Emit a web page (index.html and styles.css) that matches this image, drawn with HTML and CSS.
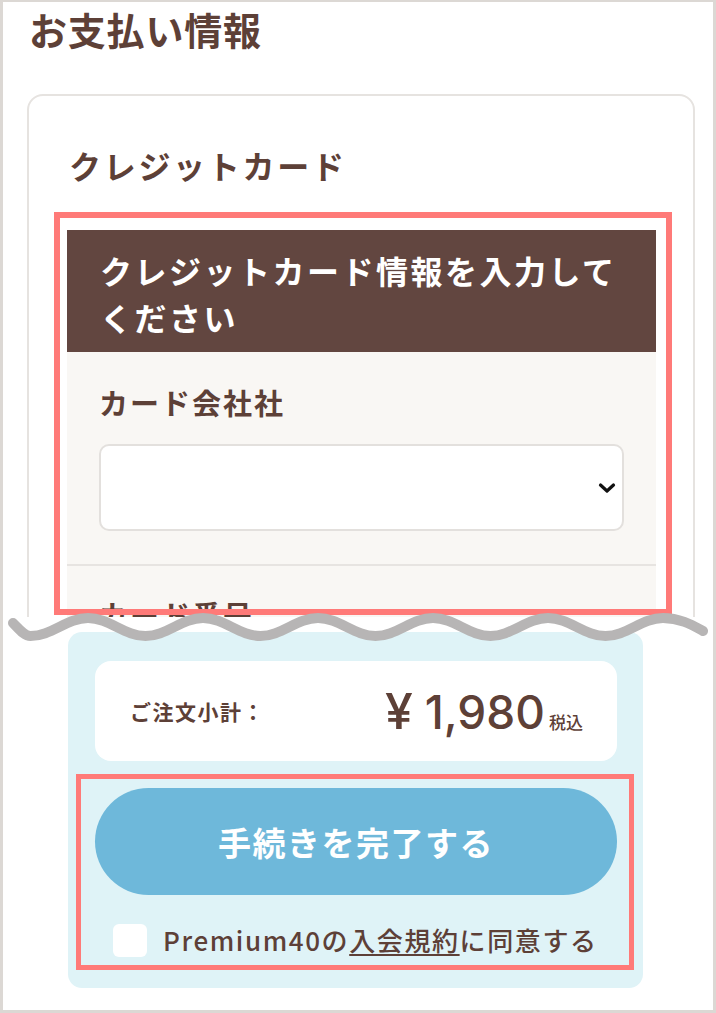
FILE: index.html
```html
<!DOCTYPE html>
<html lang="ja">
<head>
<meta charset="utf-8">
<title>お支払い情報</title>
<link rel="stylesheet" href="styles.css">
</head>
<body>
<div class="frame">
  <div class="shot-top">
    <h1 class="page-title">お支払い情報</h1>
    <section class="card">
      <h2 class="card-title">クレジットカード</h2>
      <div class="cc-form">
        <div class="cc-head">クレジットカード情報を入力してください</div>
        <div class="field">
          <label class="field-label">カード会社社</label>
          <div class="select">
            <svg class="chev" width="18" height="12" viewBox="0 0 18 12"><path d="M2.5 3 L9 9 L15.5 3" fill="none" stroke="#111" stroke-width="3.2" stroke-linecap="round" stroke-linejoin="round"/></svg>
          </div>
        </div>
        <div class="field">
          <label class="field-label">カード番号</label>
          <div class="select"></div>
        </div>
      </div>
    </section>
  </div>
  <div class="shot-bottom">
    <div class="checkout">
      <div class="subtotal">
        <span class="sub-label">ご注文小計：</span>
        <span class="price"><span class="yen">¥</span><span class="amount">1,980</span><span class="tax">税込</span></span>
      </div>
      <button class="submit" type="button">手続きを完了する</button>
      <label class="agree"><span class="check"></span><span class="agree-text">Premium40の<span class="link">入会規約</span>に同意する</span></label>
    </div>
  </div>
  <div class="annot annot-form"></div>
  <div class="annot annot-submit"></div>
  <svg class="wave" width="716" height="50" viewBox="0 600 716 50">
    <path d="M13,623 C19,629 24,636 30.5,636 C51.5,636 67,618 88,618 C109,618 124.5,636 145.5,636 C166.5,636 182,618 203,618 C224,618 239.5,636 260.5,636 C281.5,636 297,618 318,618 C339,618 354.5,636 375.5,636 C396.5,636 412,618 433,618 C454,618 469.5,636 490.5,636 C511.5,636 527,618 548,618 C569,618 584.5,636 605.5,636 C626.5,636 642,618 663,618 C680,618 692,625 703,631" fill="none" stroke="#b7b5b5" stroke-width="10" stroke-linecap="round"/>
  </svg>
</div>
</body>
</html>
```

FILE: styles.css
```css
body {
  margin: 0;
  background: #fff;
}

.frame {
  position: relative;
  width: 716px;
  height: 1013px;
  box-sizing: border-box;
  border: 3px solid #dcd8d4;
  border-top-width: 2px;
  overflow: hidden;
  background: #fff;
  color: #5d4037;
  font-family: "Noto Sans CJK JP", sans-serif;
}

.shot-top {
  height: 615px;
  overflow: hidden;
  padding: 0 18px 0 24px;
}

.page-title {
  margin: 0;
  padding: 3px 0 0 2px;
  font-size: 38px;
  line-height: 48px;
  font-weight: 700;
  letter-spacing: 0.8px;
}

.card {
  margin-top: 41px;
  height: 700px;
  border: 2px solid #e6e3e0;
  border-radius: 16px;
  padding: 49px 37px 0 38px;
}

.card-title {
  margin: 0;
  padding-left: 2px;
  font-size: 32px;
  line-height: 40px;
  font-weight: 700;
  letter-spacing: 2.7px;
}

.cc-form {
  margin-top: 45px;
  background: #f9f7f4;
}

.cc-head {
  background: #624640;
  color: #fff;
  font-size: 32px;
  line-height: 47px;
  font-weight: 700;
  letter-spacing: 2.5px;
  padding: 17px 33px 11px;
}

.field {
  padding: 30px 32px 33px;
  border-bottom: 2px solid #e7e4e1;
}

.field + .field {
  padding-top: 28px;
}

.field-label {
  display: block;
  font-size: 29px;
  line-height: 40px;
  font-weight: 700;
  letter-spacing: 2px;
}

.select {
  margin-top: 22px;
  height: 87px;
  box-sizing: border-box;
  background: #fff;
  border: 2px solid #e3e0dd;
  border-radius: 10px;
  display: flex;
  align-items: center;
  justify-content: flex-end;
  padding-right: 6px;
}

.shot-bottom {
  padding: 15px 0 0 65px;
}

.checkout {
  width: 575px;
  box-sizing: border-box;
  background: #dff3f7;
  border-radius: 14px;
  padding: 29px 26px 31px 27px;
}

.subtotal {
  height: 100px;
  box-sizing: border-box;
  background: #fff;
  border-radius: 16px;
  display: flex;
  align-items: center;
  justify-content: space-between;
  padding: 0 34px 0 35px;
}

.sub-label {
  font-size: 21px;
  font-weight: 700;
  letter-spacing: 1.5px;
}

.price {
  display: flex;
  align-items: baseline;
}

.yen,
.amount {
  font-family: Inter, "Noto Sans CJK JP", sans-serif;
  font-size: 46px;
  font-weight: 500;
  line-height: 1;
}

.yen {
  font-size: 50px;
  margin-right: 12px;
}

.tax {
  font-size: 17px;
  font-weight: 500;
  margin-left: 4px;
}

.submit {
  display: block;
  width: 100%;
  height: 107px;
  margin-top: 27px;
  border: none;
  border-radius: 54px;
  background: #6eb8da;
  color: #fff;
  font-family: "Noto Sans CJK JP", sans-serif;
  font-size: 33px;
  font-weight: 700;
  letter-spacing: 1.5px;
}

.agree {
  display: flex;
  align-items: center;
  gap: 16px;
  margin-top: 28px;
  padding-left: 18px;
}

.check {
  width: 34px;
  height: 33px;
  flex: none;
  background: #fff;
  border-radius: 6px;
}

.agree-text {
  font-size: 26px;
  line-height: 34px;
  font-weight: 500;
  letter-spacing: 1.6px;
}

.link {
  text-decoration: underline;
  text-decoration-thickness: 2px;
  text-underline-offset: 3px;
}

.annot {
  position: absolute;
  box-sizing: border-box;
  border: 6px solid #ff7a78;
}

.annot-form {
  left: 51px;
  top: 210px;
  width: 618px;
  height: 403px;
}

.annot-submit {
  left: 73px;
  top: 772px;
  width: 558px;
  height: 196px;
  border-width: 5px;
}

.wave {
  position: absolute;
  left: -3px;
  top: 598px;
}
```
